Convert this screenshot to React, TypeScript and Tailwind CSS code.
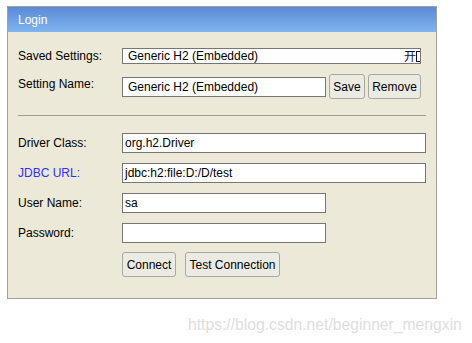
import React from "react";

/* H2 console login panel */

const font = { fontFamily: '"Liberation Sans", Arial, sans-serif' };

function Field({ w, pl = "pl-[2px]", children }: { w: string; pl?: string; children?: React.ReactNode }) {
  return (
    <div className={`${w} h-[20px] border border-[#767676] bg-white ${pl} flex items-center text-[12px] text-black leading-none overflow-hidden whitespace-nowrap`}>
      {children}
    </div>
  );
}

function Btn({ w, children }: { w: string; children: React.ReactNode }) {
  return (
    <div className={`${w} h-[25px] border border-[#a9a79f] rounded-[3px] bg-[#ecebe3] flex items-center justify-center text-[12px] text-black`}>
      {children}
    </div>
  );
}

function Row({ label, blue, children, top }: { label: string; blue?: boolean; children: React.ReactNode; top: string }) {
  return (
    <div className={`flex items-center ${top}`}>
      <div className={`w-[104px] text-[12px] leading-[14px] ${blue ? "text-[#2f2fff]" : "text-black"}`}>{label}</div>
      {children}
    </div>
  );
}

export default function App() {
  return (
    <div className="w-[472px] h-[343px] bg-white relative pt-[6px] pl-[7px]" style={font}>
      <div className="w-[430px] h-[293px] border border-[#a3a199] bg-[#ece9d8] flex flex-col">
        <div className="h-[25px] bg-gradient-to-b from-[#5a8ad7] to-[#80b4ef] flex items-center pl-[10px] text-white text-[12px]">
          Login
        </div>
        <div className="pl-[10px] flex flex-col">
          <div className="flex items-center mt-[16px] h-[16px]">
            <div className="w-[104px] text-[12px] leading-[14px] text-black">Saved Settings:</div>
            <div className="w-[299px] h-[16px] border border-[#767676] bg-white pl-[5px] flex items-center justify-between text-[12px] text-black leading-none overflow-hidden whitespace-nowrap">
              <span>Generic H2 (Embedded)</span>
              <span className="flex items-center">
                <span className="text-[12px] text-[#101040]" style={{ fontFamily: '"Noto Sans CJK SC", sans-serif' }}>开</span>
                <span className="w-[4px] h-[11px] border-l border-t border-b border-[#101040]" />
              </span>
            </div>
          </div>
          <div className="flex items-center mt-[10px] h-[25px]">
            <div className="w-[104px] text-[12px] leading-[14px] text-black -mt-[5px]">Setting Name:</div>
            <Field w="w-[204px]" pl="pl-[5px]">Generic H2 (Embedded)</Field>
            <div className="ml-[3px] flex gap-[3px]">
              <Btn w="w-[36px]">Save</Btn>
              <Btn w="w-[53px]">Remove</Btn>
            </div>
          </div>
          <div className="mt-[16px] h-px w-[408px] bg-[#9d9b93]" />
          <Row label="Driver Class:" top="mt-[17px]">
            <Field w="w-[304px]">org.h2.Driver</Field>
          </Row>
          <Row label="JDBC URL:" blue top="mt-[10px]">
            <Field w="w-[304px]">jdbc:h2:file:D:/D/test</Field>
          </Row>
          <Row label="User Name:" top="mt-[10px]">
            <Field w="w-[204px]">sa</Field>
          </Row>
          <Row label="Password:" top="mt-[10px]">
            <Field w="w-[204px]" />
          </Row>
          <div className="flex mt-[9px] pl-[104px] gap-[9px]">
            <Btn w="w-[54px]">Connect</Btn>
            <Btn w="w-[95px]">Test Connection</Btn>
          </div>
        </div>
      </div>
      <div className="absolute left-[188px] top-[316px] text-[15.7px] text-[#dedede] leading-[18px]">
        https://blog.csdn.net/beginner_mengxin
      </div>
    </div>
  );
}
